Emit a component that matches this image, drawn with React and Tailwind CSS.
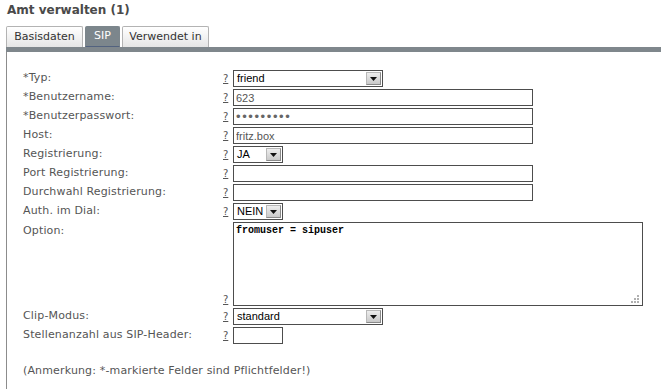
import React from 'react';

const labelFont = { fontFamily: '"DejaVu Sans", Verdana, sans-serif' };
const inputFont = { fontFamily: '"Liberation Sans", Arial, sans-serif' };

function Help() {
  return (
    <span className="w-[10px] shrink-0 text-[10px] leading-[12px] text-[#555] underline" style={labelFont}>
      ?
    </span>
  );
}

function Arrow() {
  return (
    <span className="m-[1px] flex h-[13px] w-[15px] shrink-0 items-end justify-center border border-[#b8b8b8] border-r-[#8a8a8a] border-b-[#8a8a8a] bg-gradient-to-b from-[#eeeeee] to-[#c9c9c9] pb-[3px]">
      <svg width="7" height="4" viewBox="0 0 7 4">
        <path d="M0 0h7L3.5 4z" fill="#111" />
      </svg>
    </span>
  );
}

function Select({ value, width }) {
  return (
    <div className={`flex h-[17px] items-center border border-[#4d4d4d] bg-white ${width}`}>
      <span className="flex-1 pl-[3px] text-[11px] leading-[15px] text-black" style={inputFont}>
        {value}
      </span>
      <Arrow />
    </div>
  );
}

function TextInput({ value, width = 'w-[300px]', muted = true }) {
  return (
    <input
      readOnly
      defaultValue={value}
      className={`h-[17px] border border-[#4d4d4d] bg-white px-[2px] text-[11px] outline-none ${width} ${muted ? 'text-[#555]' : 'text-black'}`}
      style={inputFont}
    />
  );
}

function Row({ label, children }) {
  return (
    <div className="mb-[2px] flex h-[17px] items-center">
      <span className="w-[200px] shrink-0 text-[11px] tracking-[0.15px] text-[#555]" style={labelFont}>
        {label}
      </span>
      <Help />
      {children}
    </div>
  );
}

export default function App() {
  return (
    <div className="h-[389px] w-[661px] overflow-hidden bg-white">
      {/* TITLE */}
      <h1 className="h-[26px] pl-[7px] pt-[2px] text-[12px] font-bold leading-[16px] text-[#4a4a4a]" style={labelFont}>
        Amt verwalten (1)
      </h1>

      {/* TABS */}
      <div className="flex items-end gap-[2px] pl-[6px]" style={labelFont}>
        <div className="flex h-[21px] w-[77px] items-center justify-center rounded-t-[2px] border border-b-0 border-[#b3b3b3] bg-gradient-to-b from-white to-[#e6e6e6] text-[11px] text-[#333]">
          Basisdaten
        </div>
        <div className="flex h-[21px] w-[35px] items-center justify-center rounded-t-[2px] border border-[#7c868c] border-b-[#52627f] bg-[#7c868c] text-[11px] text-white">
          SIP
        </div>
        <div className="flex h-[21px] w-[87px] items-center justify-center rounded-t-[2px] border border-b-0 border-[#b3b3b3] bg-gradient-to-b from-white to-[#e6e6e6] text-[11px] text-[#333]">
          Verwendet in
        </div>
      </div>
      <div className="ml-[6px] h-[5px] bg-[#7f878c]" />

      {/* FORM */}
      <div className="ml-[6px] h-[400px] border-l border-[#8c8c8c] pl-[16px] pt-[18px]">
        <Row label="*Typ:">
          <Select value="friend" width="w-[150px]" />
        </Row>
        <Row label="*Benutzername:">
          <TextInput value="623" />
        </Row>
        <Row label="*Benutzerpasswort:">
          <div className="flex h-[17px] w-[300px] items-center border border-[#4d4d4d] bg-white pl-[2px]">
            <span className="text-[13px] leading-[15px] tracking-[1.6px] text-[#666]" style={inputFont}>
              •••••••••
            </span>
          </div>
        </Row>
        <Row label="Host:">
          <TextInput value="fritz.box" />
        </Row>
        <Row label="Registrierung:">
          <Select value="JA" width="w-[50px]" />
        </Row>
        <Row label="Port Registrierung:">
          <TextInput value="" />
        </Row>
        <Row label="Durchwahl Registrierung:">
          <TextInput value="" />
        </Row>
        <Row label="Auth. im Dial:">
          <Select value="NEIN" width="w-[50px]" />
        </Row>

        <div className="mb-[2px] flex h-[84px] items-end">
          <span className="h-full w-[200px] shrink-0 text-[11px] leading-[17px] tracking-[0.15px] text-[#555]" style={labelFont}>
            Option:
          </span>
          <Help />
          <div className="relative h-[84px] w-[410px]">
            <textarea
              readOnly
              defaultValue="fromuser = sipuser"
              className="h-full w-full resize-none border border-[#4d4d4d] bg-white px-[2px] py-[1px] text-[10px] font-bold leading-[13px] text-black outline-none"
              style={{ fontFamily: '"Liberation Mono", "Courier New", monospace' }}
            />
            <svg className="absolute bottom-[3px] right-[4px]" width="8" height="8" viewBox="0 0 8 8">
              <rect x="6" y="0" width="2" height="2" fill="#b0b0b0" />
              <rect x="3" y="3" width="2" height="2" fill="#b0b0b0" />
              <rect x="6" y="3" width="2" height="2" fill="#b0b0b0" />
              <rect x="0" y="6" width="2" height="2" fill="#b0b0b0" />
              <rect x="3" y="6" width="2" height="2" fill="#b0b0b0" />
              <rect x="6" y="6" width="2" height="2" fill="#b0b0b0" />
            </svg>
          </div>
        </div>

        <Row label="Clip-Modus:">
          <Select value="standard" width="w-[150px]" />
        </Row>
        <Row label="Stellenanzahl aus SIP-Header:">
          <TextInput value="" width="w-[50px]" />
        </Row>

        <p className="mt-[19px] text-[11px] tracking-[0.15px] text-[#555]" style={labelFont}>
          (Anmerkung: *-markierte Felder sind Pflichtfelder!)
        </p>
      </div>
    </div>
  );
}
